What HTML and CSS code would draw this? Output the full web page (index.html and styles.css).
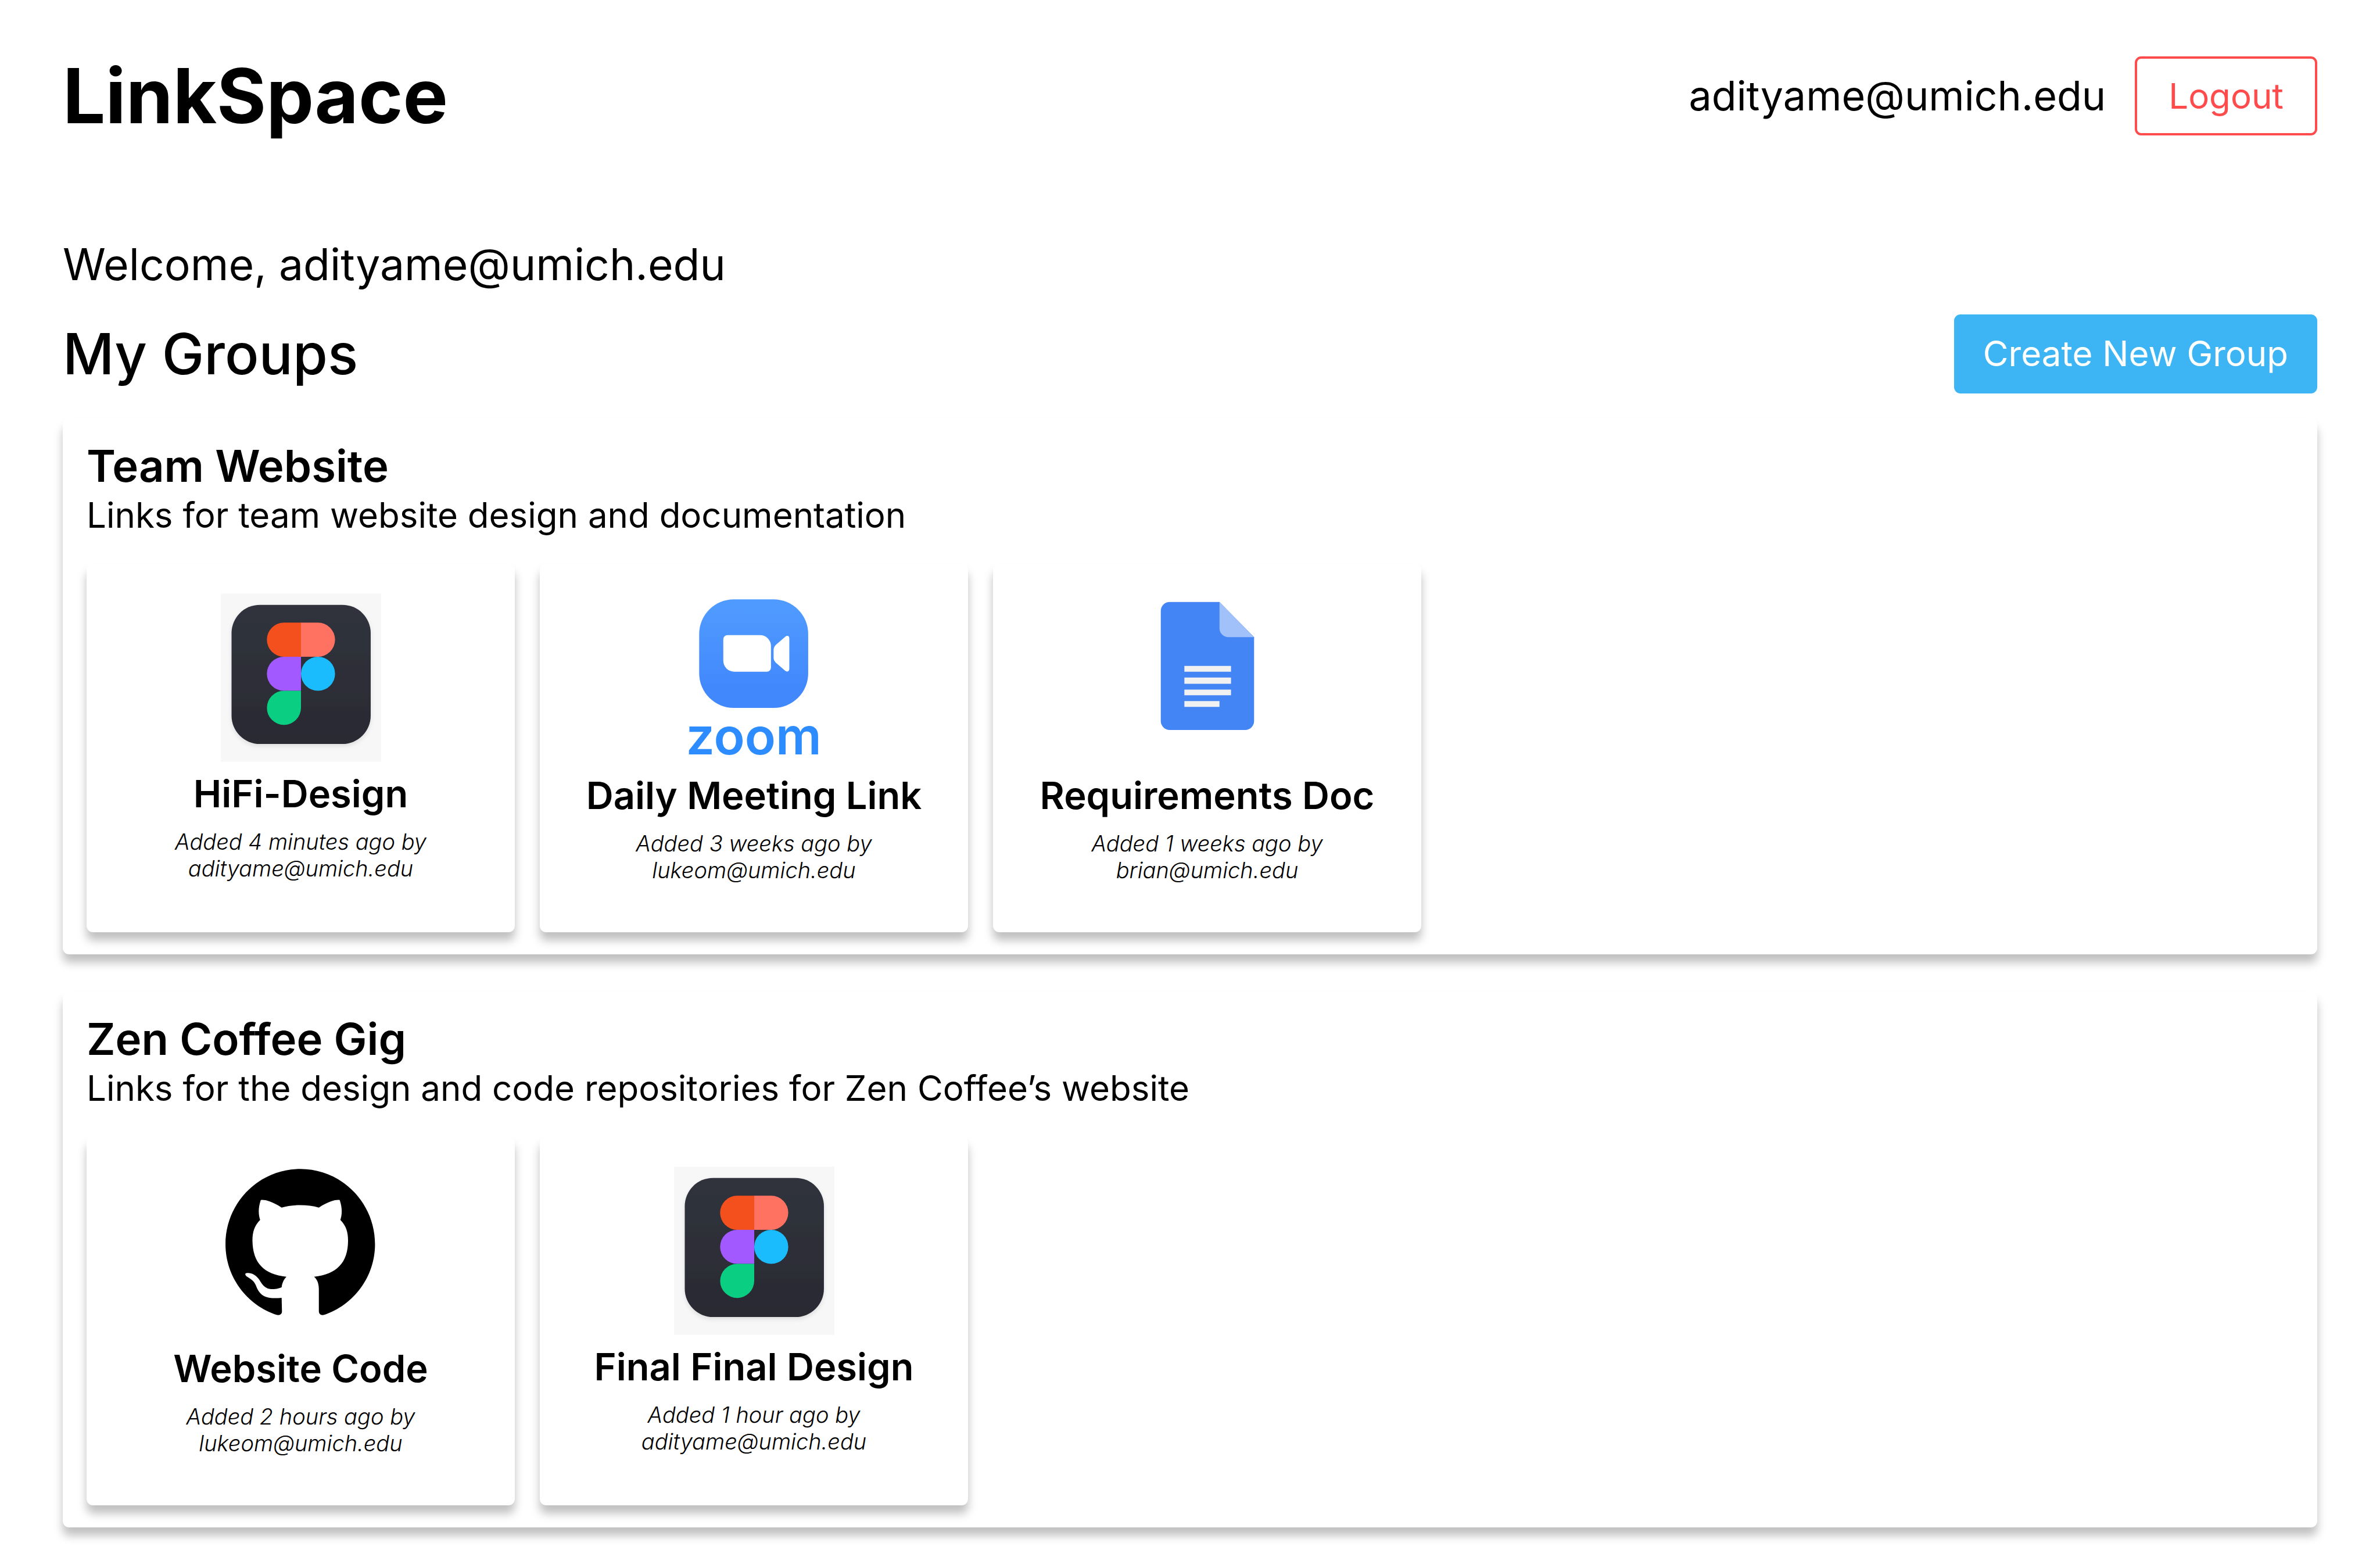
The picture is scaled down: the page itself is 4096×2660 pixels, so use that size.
FILE: index.html
```html
<!DOCTYPE html>
<html lang="en">
<head>
<meta charset="utf-8">
<meta name="viewport" content="width=device-width, initial-scale=1">
<title>LinkSpace</title>
<link rel="stylesheet" href="styles.css">
</head>
<body>
<svg class="sprite" width="0" height="0" aria-hidden="true">
  <defs>
    <linearGradient id="figma-dark" x1="0" y1="0" x2="0" y2="1">
      <stop offset="0" stop-color="#30333d"/>
      <stop offset="1" stop-color="#2b2a33"/>
    </linearGradient>
    <linearGradient id="zoom-blue" x1="0" y1="0" x2="0" y2="1">
      <stop offset="0.1" stop-color="#4f9aff"/>
      <stop offset="0.8" stop-color="#4288fd"/>
    </linearGradient>
    <filter id="figma-shadow" x="-10%" y="-10%" width="120%" height="120%">
      <feDropShadow dx="0" dy="4" stdDeviation="4" flood-color="#000" flood-opacity="0.1"/>
    </filter>
    <symbol id="figma" viewBox="0 0 306 321">
      <rect width="306" height="321" fill="#f7f7f7"/>
      <rect x="20.5" y="21.5" width="265.5" height="265.5" rx="54" fill="url(#figma-dark)" filter="url(#figma-shadow)"/>
      <path d="M153 55.5h-32.600a32.500 32.500 0 0 0 0 65H153z" fill="#f4501e"/>
      <path d="M153 55.500h32.500a32.500 32.500 0 0 1 0 65H153z" fill="#ff7262"/>
      <path d="M153 120.500h-32.600a32.500 32.500 0 0 0 0 65H153z" fill="#a259ff"/>
      <circle cx="185.500" cy="153" r="32.500" fill="#1abcfe"/>
      <path d="M153 185.500h-32.600a32.500 32.500 0 1 0 32.600 32.500z" fill="#0acf83"/>
    </symbol>
  </defs>
</svg>

<header class="topbar">
  <h1 class="logo">LinkSpace</h1>
  <div class="account">
    <span class="email">adityame@umich.edu</span>
    <button class="btn btn-outline" type="button">Logout</button>
  </div>
</header>

<main>
  <p class="welcome">Welcome, adityame@umich.edu</p>
  <div class="section-head">
    <h2 class="section-title">My Groups</h2>
    <button class="btn btn-primary" type="button">Create New Group</button>
  </div>

  <div class="groups">
    <section class="group">
      <h3 class="group-title">Team Website</h3>
      <p class="group-desc">Links for team website design and documentation</p>
      <div class="cards">
        <a class="card" href="#hifi-design">
          <svg class="thumb" viewBox="0 0 306 321" aria-hidden="true"><use href="#figma"/></svg>
          <h4 class="card-title">HiFi-Design</h4>
          <p class="card-meta">Added 4 minutes ago by<br>adityame@umich.edu</p>
        </a>
        <a class="card" href="#daily-meeting">
          <svg class="thumb thumb-tall" viewBox="0 0 306 324" aria-hidden="true">
            <rect x="48" y="11" width="208" height="207" rx="66" fill="url(#zoom-blue)"/>
            <path d="M102 79h62a21 21 0 0 1 21 21v41a8 8 0 0 1-8 8h-62a21 21 0 0 1-21-21V87a8 8 0 0 1 8-8z" fill="#fff"/>
            <path d="M194 98l18-15.500c3-3 8-3 8 3v58c0 6-5 6-8 3.500l-18-15.500q-4-4-4-9v-15q0-5 4-9.500z" fill="#fff"/>
            <text class="zoom-word" x="152" y="307" text-anchor="middle">zoom</text>
          </svg>
          <h4 class="card-title">Daily Meeting Link</h4>
          <p class="card-meta">Added 3 weeks ago by<br>lukeom@umich.edu</p>
        </a>
        <a class="card" href="#requirements">
          <svg class="thumb thumb-tall" viewBox="0 0 306 324" aria-hidden="true">
            <path d="M81 16h95l66 67v160a17 17 0 0 1-17 17H81a17 17 0 0 1-17-17V33a17 17 0 0 1 17-17z" fill="#4385f5"/>
            <path d="M176 16l66 67h-49a17 17 0 0 1-17-17z" fill="#a1c1fa"/>
            <path d="M109 138h89v11h-89zM109 160h89v12h-89zM109 183h89v11h-89zM109 205h67v11h-67z" fill="#f1f1f1"/>
          </svg>
          <h4 class="card-title">Requirements Doc</h4>
          <p class="card-meta">Added 1 weeks ago by<br>brian@umich.edu</p>
        </a>
      </div>
    </section>

    <section class="group">
      <h3 class="group-title">Zen Coffee Gig</h3>
      <p class="group-desc">Links for the design and code repositories for Zen Coffee’s website</p>
      <div class="cards">
        <a class="card" href="#website-code">
          <svg class="thumb thumb-tall" viewBox="0 0 306 324" aria-hidden="true">
            <path transform="translate(-340 -83) scale(0.6122 0.514)" d="M803 170C674 170 570 295 570 449C570 570 636 675 731 712C741 714 746 707 746 699L745 648C690 655 676 636 665 603C658 583 646 577 635 568C629 559 631 556 641 556C660 556 673 575 680 590C692 612 703 616 716 616C730 616 738 613 745 609C747 591 752 580 760 570C690 560 655 520 654 435C654 405 660 380 678 359C674 345 670 320 680 285C690 283 710 286 745 313C763 307 783 304 803 304C823 304 843 307 861 313C896 286 916 283 926 285C936 320 932 345 928 359C946 380 952 405 952 435C952 520 915 560 846 570C856 580 861 595 861 617L861 698C861 707 866 714 876 712C970 675 1036 570 1036 449C1036 295 932 170 803 170Z"/>
          </svg>
          <h4 class="card-title">Website Code</h4>
          <p class="card-meta">Added 2 hours ago by<br>lukeom@umich.edu</p>
        </a>
        <a class="card" href="#final-design">
          <svg class="thumb" viewBox="0 0 306 321" aria-hidden="true"><use href="#figma"/></svg>
          <h4 class="card-title">Final Final Design</h4>
          <p class="card-meta">Added 1 hour ago by<br>adityame@umich.edu</p>
        </a>
      </div>
    </section>
  </div>
</main>
</body>
</html>
```
FILE: styles.css
```css
* {
  box-sizing: border-box;
}

body {
  margin: 0;
  padding: 86px 108px 32px;
  background: #fff;
  color: #000;
  font-family: Inter, "Liberation Sans", sans-serif;
  font-optical-sizing: none;
}

h1, h2, h3, h4, p {
  margin: 0;
}

.sprite {
  position: absolute;
}

.topbar,
.section-head {
  display: flex;
  align-items: center;
  justify-content: space-between;
}

.logo {
  font-size: 130px;
  line-height: 158px;
  font-weight: 700;
}

.account {
  display: flex;
  align-items: center;
  gap: 50px;
}

.email {
  font-size: 70px;
  line-height: 84px;
}

.btn {
  padding: 27px 46px 29px;
  border: 4px solid;
  border-radius: 11px;
  font-family: inherit;
  font-size: 60px;
  line-height: 72px;
  font-weight: 400;
}

.btn-outline {
  padding: 28px 54px;
  border-color: #ff4b4b;
  background: #fff;
  color: #ff4b4b;
}

.btn-primary {
  border-color: #3db5f5;
  background: #3db5f5;
  color: #fff;
}

.welcome {
  margin-top: 165px;
  font-size: 75px;
  line-height: 92px;
}

.section-head {
  margin-top: 40px;
}

.section-title {
  font-size: 97px;
  line-height: 118px;
  font-weight: 500;
}

.groups {
  display: grid;
  gap: 65px;
  margin-top: 44px;
}

.group {
  padding: 34px 41px 38px;
}

.group,
.card {
  border-radius: 11px;
  background: #fff;
  box-shadow: 0 14px 16px rgba(0, 0, 0, 0.25);
}

.group-title {
  font-size: 76px;
  line-height: 92px;
  font-weight: 600;
}

.group-desc {
  margin-top: 3px;
  font-size: 60px;
  line-height: 72px;
}

.cards {
  display: grid;
  grid-template-columns: repeat(auto-fill, 737px);
  gap: 43px;
  margin-top: 48px;
}

.card {
  display: flex;
  flex-direction: column;
  align-items: center;
  padding: 51px 24px 84px;
  color: inherit;
  text-align: center;
  text-decoration: none;
}

.thumb {
  width: 276px;
  height: 290px;
  overflow: visible;
}

.thumb-tall {
  height: 293px;
}

.zoom-word {
  fill: #2d8cff;
  font-size: 97px;
  font-weight: 600;
}

.card-title {
  margin-top: 15px;
  font-size: 65px;
  line-height: 79px;
  font-weight: 600;
}

.card-meta {
  margin-top: 20px;
  font-size: 38px;
  line-height: 46px;
  font-weight: 300;
  font-style: italic;
}
```
